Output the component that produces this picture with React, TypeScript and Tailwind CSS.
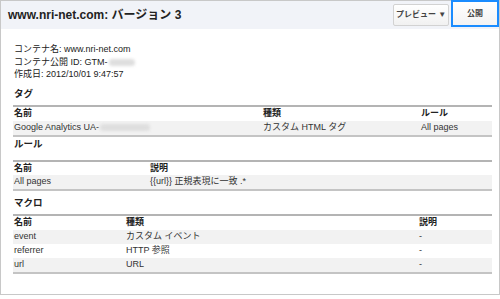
import React from "react";

const font = { fontFamily: '"Liberation Sans", "Noto Sans CJK JP", Arial, sans-serif' };

function Blur({ w }: { w: number }) {
  return (
    <span
      className="inline-block align-middle h-[7px] bg-[#dedede] blur-[1.5px] rounded-sm ml-[1px]"
      style={{ width: w }}
    />
  );
}

function Heading({ children, className }: { children: React.ReactNode; className: string }) {
  return <div className={"text-[9.5px] font-bold leading-[12px] text-[#222] pl-[1px] " + className}>{children}</div>;
}

export default function App() {
  return (
    <div className="w-[500px] h-[299px] bg-white overflow-hidden" style={font}>
      <div className="w-[500px] h-[295px] border border-[#c8c8c8] flex flex-col">
        <div className="h-[28px] bg-[#f1f3f8] flex items-center justify-between shrink-0">
          <div className="pl-[7px] text-[12px] font-bold text-[#222] leading-none">
            www.nri-net.com: バージョン 3
          </div>
          <div className="flex items-start h-full">
            <button className="mt-[3px] mr-[2px] h-[22px] w-[56px] border border-[#d2d2d2] rounded-[2px] bg-gradient-to-b from-white to-[#f1f1f1] text-[8px] font-bold text-[#444] flex items-center justify-center">
              プレビュー ▼
            </button>
            <button className="h-[27px] w-[48px] border-[2px] border-[#1a8cff] bg-gradient-to-b from-white to-[#f3f3f3] text-[8px] font-bold text-[#444] flex items-center justify-center -mt-[1px]">
              公開
            </button>
          </div>
        </div>

        <div className="pl-[12px] pr-[7px] text-[#222]">
          <div className="pt-[14px] text-[9px] leading-[12.5px] pl-[1px]">
            <div>コンテナ名: www.nri-net.com</div>
            <div>
              コンテナ公開 ID: GTM-<Blur w={26} />
            </div>
            <div>作成日: 2012/10/01 9:47:57</div>
          </div>

          <Heading className="mt-[7px]">タグ</Heading>
          <div className="mt-[5px] border-t-[2px] border-b-[2px] border-t-[#b4b4b4] border-b-[#c4c4c4] text-[9px]">
            <div className="grid grid-cols-[250px_158px_1fr] h-[14px] items-center font-bold">
              <div className="pl-[1px]">名前</div>
              <div>種類</div>
              <div>ルール</div>
            </div>
            <div className="grid grid-cols-[250px_158px_1fr] h-[14px] items-center bg-[#f2f2f2] text-[#333]">
              <div className="pl-[1px]">
                Google Analytics UA-<Blur w={50} />
              </div>
              <div>カスタム HTML タグ</div>
              <div>All pages</div>
            </div>
          </div>

          <Heading className="mt-[1px]">ルール</Heading>
          <div className="mt-[10px] border-t-[2px] border-b-[2px] border-t-[#b4b4b4] border-b-[#c4c4c4] text-[9px]">
            <div className="grid grid-cols-[137px_1fr] h-[13px] items-center font-bold">
              <div className="pl-[1px]">名前</div>
              <div>説明</div>
            </div>
            <div className="grid grid-cols-[137px_1fr] h-[14px] items-center bg-[#f2f2f2] text-[#333]">
              <div className="pl-[1px]">All pages</div>
              <div>{"{{url}}"} 正規表現に一致 .*</div>
            </div>
          </div>

          <Heading className="mt-[6px]">マクロ</Heading>
          <div className="mt-[5px] border-t-[2px] border-b-[2px] border-t-[#b4b4b4] border-b-[#c4c4c4] text-[9px]">
            <div className="grid grid-cols-[113px_293px_1fr] h-[14px] items-center font-bold">
              <div className="pl-[1px]">名前</div>
              <div>種類</div>
              <div>説明</div>
            </div>
            <div className="grid grid-cols-[113px_293px_1fr] h-[14px] items-center bg-[#f2f2f2] text-[#333]">
              <div className="pl-[1px]">event</div>
              <div>カスタム イベント</div>
              <div>-</div>
            </div>
            <div className="grid grid-cols-[113px_293px_1fr] h-[14px] items-center text-[#333]">
              <div className="pl-[1px]">referrer</div>
              <div>HTTP 参照</div>
              <div>-</div>
            </div>
            <div className="grid grid-cols-[113px_293px_1fr] h-[14px] items-center bg-[#f2f2f2] text-[#333]">
              <div className="pl-[1px]">url</div>
              <div>URL</div>
              <div>-</div>
            </div>
          </div>
        </div>
      </div>
    </div>
  );
}
